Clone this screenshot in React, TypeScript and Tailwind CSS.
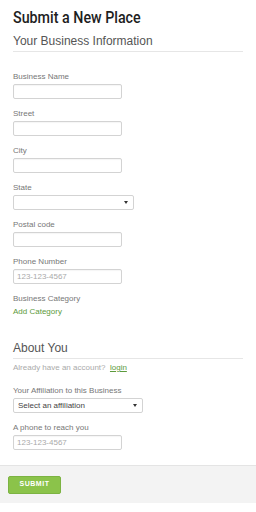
import type { ReactNode } from "react";

const SANS = { fontFamily: '"Liberation Sans", Arial, sans-serif' };

function Label({ children }: { children: ReactNode }) {
  return <div className="h-[10px] text-[8px] leading-[10px] text-[#777]">{children}</div>;
}

function TextInput({ placeholder }: { placeholder?: string }) {
  return (
    <div className="mt-[2px] flex h-[15px] w-[109px] items-center rounded-[2px] border border-[#d3d3d3] bg-white px-[3px] text-[8px] text-[#aaa] shadow-[inset_0_1px_1px_rgba(0,0,0,0.04)]">
      {placeholder}
    </div>
  );
}

function SelectBox({ width, value }: { width: string; value?: string }) {
  return (
    <div
      className={`mt-[2px] flex h-[15px] ${width} items-center justify-between rounded-[2px] border border-[#d3d3d3] bg-white pl-[4px] pr-[5px] text-[8px] text-[#444]`}
    >
      <span>{value}</span>
      <span className="h-0 w-0 border-x-[2px] border-t-[3px] border-x-transparent border-t-[#333]" />
    </div>
  );
}

function Field({ label, children }: { label: string; children: ReactNode }) {
  return (
    <div className="mb-[10px]">
      <Label>{label}</Label>
      {children}
    </div>
  );
}

export default function App() {
  return (
    <div className="flex h-[512px] w-[256px] flex-col bg-white" style={SANS}>
      <div className="px-[13px] pt-[6px]">
        {/* condensed display face isn't available, so squeeze Roboto */}
        <h1
          className="h-[22px] origin-left scale-x-[0.84] text-[17px] leading-[22px] font-medium whitespace-nowrap text-[#1e1e1e]"
          style={{ fontFamily: "Roboto, sans-serif" }}
        >
          Submit a New Place
        </h1>
        <h2 className="mt-[6px] border-b border-[#e6e6e6] pb-[3px] text-[12px] leading-[14px] text-[#555]">
          Your Business Information
        </h2>

        <div className="mt-[20px]">
          <Field label="Business Name">
            <TextInput />
          </Field>
          <Field label="Street">
            <TextInput />
          </Field>
          <Field label="City">
            <TextInput />
          </Field>
          <Field label="State">
            <SelectBox width="w-[121px]" />
          </Field>
          <Field label="Postal code">
            <TextInput />
          </Field>
          <Field label="Phone Number">
            <TextInput placeholder="123-123-4567" />
          </Field>
          <Label>Business Category</Label>
          <div className="mt-[3px] h-[10px] text-[8px] leading-[10px] text-[#5c9a3c]">Add Category</div>
        </div>

        <h2 className="mt-[24px] border-b border-[#e6e6e6] pb-[3px] text-[12px] leading-[14px] text-[#555]">
          About You
        </h2>
        <div className="mt-[4px] h-[10px] text-[8px] leading-[10px] text-[#aaa]">
          Already have an account?&nbsp;&nbsp;
          <span className="text-[#5c9a3c] underline">login</span>
        </div>

        <div className="mt-[13px]">
          <Field label="Your Affiliation to this Business">
            <SelectBox width="w-[130px]" value="Select an affiliation" />
          </Field>
          <Field label="A phone to reach you">
            <TextInput placeholder="123-123-4567" />
          </Field>
        </div>
      </div>

      <div className="mt-auto mb-[9px] flex h-[38px] items-center border-t border-[#e4e4e4] bg-[#f3f3f3] px-[8px]">
        <button className="h-[18px] w-[53px] rounded-[2px] border border-[#7cb342] bg-[#8bc34a] text-[7px] font-bold tracking-[0.5px] text-white">
          SUBMIT
        </button>
      </div>
    </div>
  );
}
